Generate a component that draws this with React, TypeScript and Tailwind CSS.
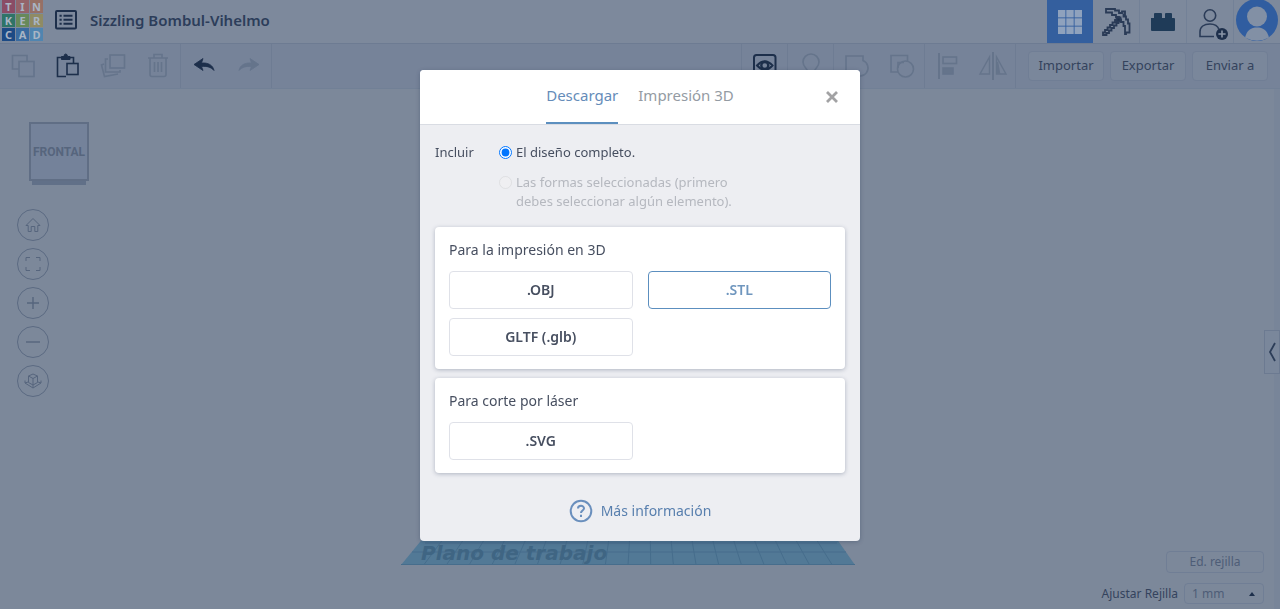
import type { ReactNode } from "react";

const LOGO = [
  { letter: "T", color: "bg-[#8a4c66]" },
  { letter: "I", color: "bg-[#94646a]" },
  { letter: "N", color: "bg-[#967066]" },
  { letter: "K", color: "bg-[#2f7468]" },
  { letter: "E", color: "bg-[#67895a]" },
  { letter: "R", color: "bg-[#8f8b64]" },
  { letter: "C", color: "bg-[#1c4a85]" },
  { letter: "A", color: "bg-[#3a6ba0]" },
  { letter: "D", color: "bg-[#5085b0]" },
];

function Icon({ size = 26, children }: { size?: number; children: ReactNode }) {
  return (
    <svg
      width={size}
      height={size}
      viewBox="0 0 26 26"
      fill="none"
      stroke="currentColor"
      strokeWidth="1.6"
      aria-hidden="true"
    >
      {children}
    </svg>
  );
}

function ToolButton({
  label,
  active = false,
  children,
}: {
  label: string;
  active?: boolean;
  children: ReactNode;
}) {
  return (
    <button
      type="button"
      aria-label={label}
      className={`flex h-full w-[45px] items-center justify-center ${
        active ? "text-[#1d2f4b]" : "text-[#65748b]"
      }`}
    >
      {children}
    </button>
  );
}

function ToolGroup({ children }: { children: ReactNode }) {
  return <div className="flex h-full border-r border-[#6e7c93]">{children}</div>;
}

function ViewButton({ label, children }: { label: string; children: ReactNode }) {
  return (
    <button
      type="button"
      aria-label={label}
      className="flex size-8 items-center justify-center rounded-full border border-[#5b6a82] text-[#56657d]"
    >
      {children}
    </button>
  );
}

function FormatButton({ selected = false, children }: { selected?: boolean; children: ReactNode }) {
  return (
    <button
      type="button"
      className={`h-[38px] rounded border bg-white text-sm font-semibold ${
        selected ? "border-[#5c8fbf] text-[#6f96be]" : "border-[#dfe1e8] text-[#474f60]"
      }`}
    >
      {children}
    </button>
  );
}

function Header() {
  return (
    <header className="flex h-11 shrink-0 items-center border-b border-[#6d7b92] bg-[#7d899c]">
      <div className="flex h-full items-center pb-0.5">
        <a href="#home" aria-label="Tinkercad" className="ml-0.5 grid grid-cols-3 gap-px">
          {LOGO.map((tile) => (
            <span
              key={tile.letter}
              className={`flex size-[13px] items-center justify-center text-[11px] leading-[13px] font-bold text-[#a9b5c4] ${tile.color}`}
            >
              {tile.letter}
            </span>
          ))}
        </a>
        <button type="button" aria-label="Diseños" className="ml-2.5 pb-0.5 text-[#1d2f4b]">
          <Icon>
            <rect x="3" y="4" width="20" height="17.5" rx="1" strokeWidth="2" />
            <path d="M10.500 8.800h9M10.500 12.800h9M10.500 16.800h9" strokeWidth="2" />
            <path d="M6.500 8.800h2.200M6.500 12.800h2.200M6.500 16.800h2.200" strokeWidth="2" />
          </Icon>
        </button>
        <h1 className="ml-[11px] pb-0.5 text-[15px] leading-5 font-semibold text-[#2c3d5a]">
          Sizzling Bombul-Vihelmo
        </h1>
      </div>

      <nav className="ml-auto flex h-full items-center">
        <button
          type="button"
          aria-label="Diseño 3D"
          className="flex h-full w-[46px] items-center justify-center bg-[#345f9e]"
        >
          <svg width="24" height="24" viewBox="0 0 24 24" fill="#8fa2bd" aria-hidden="true">
            {[0, 8.3, 16.6].map((y) =>
              [0, 8.3, 16.6].map((x) => <rect key={`${x}-${y}`} x={x} y={y} width="7.4" height="7.4" />),
            )}
          </svg>
        </button>
        <button
          type="button"
          aria-label="Bloques"
          className="flex h-full w-[47px] items-center justify-center border-r border-[#738197]"
        >
          <svg
            width="30"
            height="30"
            viewBox="0 0 30 30"
            fill="none"
            stroke="#2a3b57"
            strokeWidth="1.8"
            aria-hidden="true"
          >
            <path d="M5 2h9v1.500h4V6h3V4.500h3v3h-1.500v2H25v3h2v4h1.500v9H25v1.500h-1V19h-1.500v-4H20v-2.500h-2V10h-3V8h-4V5.500H5z" />
            <path d="M17.500 13h-3.500v2.500h-2.500V18H9v2.500H6.500V23H4v2.500H2V28h3.500v-2H8v-2.500h2.500V21H13v-2.500h2.500V16h2z" />
            <path d="M15.500 10.500h4v4h-4z" fill="#1d2f4b" />
          </svg>
        </button>
        <button
          type="button"
          aria-label="Ladrillos"
          className="flex h-full w-[47px] items-center justify-center border-r border-[#738197]"
        >
          <svg width="26" height="20" viewBox="0 0 26 20" fill="#1f3b58" aria-hidden="true">
            <path d="M1 6h3V2q0-1 1-1h6q1 0 1 1v4h3V2q0-1 1-1h5q1 0 1 1v4h2q1 0 1 1v11q0 1-1 1H2q-1 0-1-1z" />
          </svg>
        </button>
        <button
          type="button"
          aria-label="Invitar"
          className="flex h-full w-[47px] items-end justify-center border-r border-[#738197] pl-1"
        >
          <svg width="32" height="34" viewBox="0 0 32 34" fill="none" stroke="#2b3c58" strokeWidth="1.6" aria-hidden="true">
            <circle cx="14" cy="6.500" r="5.700" />
            <path d="M18 27.500H4V23c0-5 4-8 10-8s8 2.500 9 5.500" />
            <circle cx="26" cy="25" r="6" fill="#1d2f4b" stroke="none" />
            <path d="M26 21.400v7.200M22.400 25h7.200" stroke="#8a96a8" />
          </svg>
        </button>
        <button type="button" aria-label="Cuenta" className="flex h-full w-[46px] items-start justify-center">
          <svg width="42" height="42" viewBox="0 0 42 42" aria-hidden="true">
            <circle cx="21" cy="20" r="21" fill="#305da0" />
            <circle cx="21" cy="16.500" r="10" fill="#8290a5" />
            <path d="M9 37.500C11 30 15 27.500 21 27.500s10 2.500 12 10Q21 44 9 37.500z" fill="#8290a5" />
          </svg>
        </button>
      </nav>
    </header>
  );
}

function Toolbar() {
  return (
    <div className="flex h-[45px] shrink-0 items-center border-b border-[#718096] bg-[#768399]">
      <ToolGroup>
        <ToolButton label="Copiar">
          <Icon>
            <path d="M9 16H2.500V2.500H17V8" />
            <rect x="9" y="8.500" width="15" height="15" />
          </Icon>
        </ToolButton>
        <ToolButton label="Pegar" active>
          <Icon>
            <path d="M11 23.500H2.500v-19H7M14 4.500h4.500V10" />
            <path d="M6.500 6.500V3.500h2.500q0-2.500 1.700-2.500T12.500 3.500H15v3z" fill="currentColor" strokeWidth="1" />
            <rect x="12" y="10.500" width="11" height="11" />
          </Icon>
        </ToolButton>
        <ToolButton label="Duplicar">
          <Icon>
            <rect x="10" y="2" width="14.500" height="13" />
            <path d="M8 6H5.500v13H20v-2" />
            <path d="M4 11l-2.500 1 3 11.500L18 21" />
          </Icon>
        </ToolButton>
        <ToolButton label="Eliminar">
          <Icon>
            <path d="M3 5h20M9 5V1.500h8V5M5 5v16.500q0 2 2 2h12q2 0 2-2V5M9.500 9v10M13 9v10M16.500 9v10" />
          </Icon>
        </ToolButton>
      </ToolGroup>
      <ToolGroup>
        <ToolButton label="Deshacer" active>
          <Icon>
            <path
              d="M3 11.500 12 5.500 10.500 10C17 9.500 22 12 23 17.500 20 14 16 13 10.500 13.500L12 17.500z"
              fill="currentColor"
              strokeWidth="0.800"
            />
          </Icon>
        </ToolButton>
        <ToolButton label="Rehacer">
          <Icon>
            <path
              d="M23 11.500 14 5.500 15.500 10C9 9.500 4 12 3 17.500 6 14 10 13 15.500 13.500L14 17.500z"
              fill="currentColor"
              strokeWidth="0.800"
            />
          </Icon>
        </ToolButton>
      </ToolGroup>

      <div className="ml-auto flex h-full border-l border-[#6e7c93]">
        <ToolGroup>
          <ToolButton label="Mostrar todo" active>
            <Icon>
              <rect x="2" y="2" width="21.500" height="21.500" rx="2.500" strokeWidth="2" />
              <path d="M5 12.500Q12.800 4 20.500 12.500 12.800 21 5 12.500z" strokeWidth="2" />
              <circle cx="12.800" cy="12.500" r="3.500" strokeWidth="2.400" />
            </Icon>
          </ToolButton>
        </ToolGroup>
        <ToolGroup>
          <ToolButton label="Notas">
            <Icon>
              <path d="M9.500 18.500c0-3-4.500-4.500-4.500-9.500a8 8 0 0 1 16 0c0 5-4.500 6.500-4.500 9.500zM10 22h6" />
            </Icon>
          </ToolButton>
        </ToolGroup>
        <ToolGroup>
          <ToolButton label="Agrupar">
            <Icon>
              <path d="M2 3h17v4.600a8 8 0 1 1-9 12.700H2z" />
            </Icon>
          </ToolButton>
          <ToolButton label="Desagrupar">
            <Icon>
              <path d="M9 19H2V2.500h16.500V8" />
              <circle cx="16.500" cy="16" r="8" />
              <path d="M9 15V9.500h6" />
            </Icon>
          </ToolButton>
        </ToolGroup>
        <ToolGroup>
          <ToolButton label="Alinear">
            <Icon>
              <path d="M4 0v26" strokeWidth="2" />
              <rect x="8" y="4" width="13.500" height="6.500" />
              <rect x="8" y="15" width="10" height="6" fill="currentColor" />
            </Icon>
          </ToolButton>
          <ToolButton label="Reflejar">
            <svg
              width="30"
              height="28"
              viewBox="0 0 30 28"
              fill="none"
              stroke="currentColor"
              strokeWidth="1.4"
              aria-hidden="true"
            >
              <path d="M15 0v28" strokeWidth="2" />
              <path d="M11.500 5v17H2zM18.500 5v17H28z" />
              <path d="M19.500 10v11h2z" fill="currentColor" />
            </svg>
          </ToolButton>
        </ToolGroup>
        <div className="flex items-center gap-1.5 px-3">
          {["Importar", "Exportar", "Enviar a"].map((label) => (
            <button
              key={label}
              type="button"
              className="h-[30px] w-[76px] rounded-sm border border-[#707e95] bg-[#7a879b] text-[13px] text-[#34435d]"
            >
              {label}
            </button>
          ))}
        </div>
      </div>
    </div>
  );
}

function Workspace() {
  return (
    <main className="flex min-h-0 flex-1 bg-[#7c889a]">
      <div className="flex w-[156px] shrink-0 flex-col gap-6 pt-[33px] pl-[17px]">
        <button type="button" className="ml-3 flex w-[60px] flex-col items-center">
          <span className="flex h-[59px] w-full items-center justify-center border-2 border-[#606e85] bg-[#74829a] font-['Roboto',sans-serif] text-xs font-bold text-[#56657d]">
            FRONTAL
          </span>
          <span className="h-1 w-[54px] bg-[#617088]" />
        </button>
        <div className="flex flex-col gap-[7px]">
          <ViewButton label="Vista inicial">
            <svg width="16" height="16" viewBox="0 0 16 16" fill="none" stroke="currentColor" aria-hidden="true">
              <path d="M3.200 8.500H1L8 1.500l7 7h-2.200v6H9.800V9.500H6.200v5h-3z" />
            </svg>
          </ViewButton>
          <ViewButton label="Encajar vista">
            <svg width="16" height="16" viewBox="0 0 16 16" fill="none" stroke="currentColor" aria-hidden="true">
              <path d="M1 5V1.500h4M11 1.500h4V5M15 11v3.500h-4M5 14.500H1V11" />
            </svg>
          </ViewButton>
          <ViewButton label="Acercar">
            <svg width="14" height="14" viewBox="0 0 14 14" stroke="currentColor" strokeWidth="1.4" aria-hidden="true">
              <path d="M7 1v12M1 7h12" />
            </svg>
          </ViewButton>
          <ViewButton label="Alejar">
            <svg width="14" height="14" viewBox="0 0 14 14" stroke="currentColor" strokeWidth="1.4" aria-hidden="true">
              <path d="M0 7h14" />
            </svg>
          </ViewButton>
          <ViewButton label="Vista ortográfica">
            <svg width="18" height="16" viewBox="0 0 18 16" fill="none" stroke="currentColor" aria-hidden="true">
              <path d="M9 1l4.500 2v6.500L9 12 4.500 9.500V3zM4.500 3 9 5.500 13.500 3M9 5.500V15" />
              <path d="M1 7.500v2.500l8 5 8-5V7.500M1 10l3-1M17 10l-3-1" />
            </svg>
          </ViewButton>
        </div>
      </div>

      <div className="flex flex-1 items-end justify-center pb-11">
        <svg width="454" height="40" viewBox="0 0 454 40" aria-hidden="true">
          <path d="M33 0h393l28 40H0z" fill="#527996" />
          <g stroke="#466d8c" fill="none">
            <path d="M11 27h434M0 39.500h454M24 18h412" />
            {[1, 2, 3, 4, 5, 6, 7, 8, 9, 10, 11, 12, 13, 14, 15, 16, 17, 18, 19].map((n) => (
              <path key={n} d={`M${n * 22.7} 40L${33 + n * 19.65} 0`} />
            ))}
          </g>
          <text
            x="20"
            y="35"
            fill="#3f6583"
            className="font-['DejaVu_Sans',sans-serif] text-[20px] font-bold italic"
          >
            Plano de trabajo
          </text>
        </svg>
      </div>

      <aside className="flex w-[180px] shrink-0 flex-col items-end border-r-[6px] border-[#788599]">
        <button
          type="button"
          aria-label="Mostrar formas"
          className="mt-[241px] -mr-[6px] flex h-11 w-4 items-center justify-center border border-[#6c7a91] bg-[#7a879b]"
        >
          <svg width="8" height="20" viewBox="0 0 8 20" fill="none" stroke="#2c3d58" strokeWidth="1.8" aria-hidden="true">
            <path d="M7 1 2 10l5 9" />
          </svg>
        </button>
        <div className="mt-auto flex flex-col items-end gap-2.5 pr-2.5 pb-[5px] text-xs">
          <button
            type="button"
            className="h-[22px] w-[98px] rounded-sm border border-[#707e95] text-[#4e5d77]"
          >
            Ed. rejilla
          </button>
          <div className="flex items-center gap-1.5">
            <label htmlFor="snap" className="text-[#34435d]">
              Ajustar Rejilla
            </label>
            <div className="grid w-20 items-center">
              <select
                id="snap"
                className="col-start-1 row-start-1 h-[21px] appearance-none rounded-sm border border-[#707e95] pl-[7px] text-[#4e5d77]"
              >
                <option>1 mm</option>
              </select>
              <svg
                width="6"
                height="4"
                viewBox="0 0 6 4"
                fill="#1d2f4b"
                aria-hidden="true"
                className="pointer-events-none col-start-1 row-start-1 mr-[9px] justify-self-end"
              >
                <path d="M3 0l3 4H0z" />
              </svg>
            </div>
          </div>
        </div>
      </aside>
    </main>
  );
}

function DownloadDialog() {
  return (
    <div className="fixed inset-0 flex items-start justify-center pt-[70px]">
      <section
        role="dialog"
        aria-label="Descargar"
        className="w-[440px] max-w-full overflow-hidden rounded bg-[#edeef2] text-[#474f60] shadow-[0_1px_4px_rgba(30,45,75,0.3)]"
      >
        <div className="grid h-[55px] grid-cols-[1fr_auto_1fr] border-b border-[#d9dce3] bg-white">
          <div className="col-start-2 flex gap-5 text-[15px]" role="tablist">
            <button
              type="button"
              role="tab"
              aria-selected="true"
              className="border-b-2 border-[#5c8fbf] pb-0.5 text-[#658cb9]"
            >
              Descargar
            </button>
            <button
              type="button"
              role="tab"
              aria-selected="false"
              className="border-b-2 border-transparent pb-0.5 text-[#949ba3]"
            >
              Impresión 3D
            </button>
          </div>
          <button type="button" aria-label="Cerrar" className="mr-[22px] self-center justify-self-end">
            <svg width="12" height="12" viewBox="0 0 12 12" stroke="#a2a2a4" strokeWidth="2.800" aria-hidden="true">
              <path d="M1 1l10 10M11 1L1 11" />
            </svg>
          </button>
        </div>

        <div className="px-[15px] pt-[18px] pb-[18px]">
          <div
            role="radiogroup"
            aria-labelledby="include"
            className="grid grid-cols-[64px_1fr] text-[13px] leading-[19px]"
          >
            <span id="include">Incluir</span>
            <div className="flex flex-col gap-[11px]">
              <label className="flex items-start gap-1">
                <input type="radio" name="include" defaultChecked className="mt-[3px] size-[13px]" />
                El diseño completo.
              </label>
              <label className="flex items-start gap-1 text-[#b5b8bf]">
                <input type="radio" name="include" disabled className="mt-[3px] size-[13px] shrink-0 opacity-40" />
                <span>
                  Las formas seleccionadas (primero
                  <br />
                  debes seleccionar algún elemento).
                </span>
              </label>
            </div>
          </div>

          <div className="mt-4 rounded bg-white px-[14px] py-[13px] shadow-[0_1px_4px_rgba(60,75,105,0.35)]">
            <h2 className="text-sm leading-5">Para la impresión en 3D</h2>
            <div className="mt-[11px] grid grid-cols-2 gap-x-[15px] gap-y-[9px]">
              <FormatButton>.OBJ</FormatButton>
              <FormatButton selected>.STL</FormatButton>
              <FormatButton>GLTF (.glb)</FormatButton>
            </div>
          </div>

          <div className="mt-[9px] rounded bg-white px-[14px] py-[13px] shadow-[0_1px_4px_rgba(60,75,105,0.35)]">
            <h2 className="text-sm leading-5">Para corte por láser</h2>
            <div className="mt-[11px] grid grid-cols-2 gap-x-[15px]">
              <FormatButton>.SVG</FormatButton>
            </div>
          </div>

          <a href="#help" className="mt-[26px] flex items-center justify-center gap-2 text-sm text-[#587fae]">
            <svg width="24" height="24" viewBox="0 0 24 24" fill="none" stroke="#6a8fbd" strokeWidth="2" aria-hidden="true">
              <circle cx="12" cy="12" r="10.300" />
              <path d="M9 9.500C9 6 15 6 15 9.300c0 2.200-3 2.300-3 4.700M12 15.800v2.200" />
            </svg>
            Más información
          </a>
        </div>
      </section>
    </div>
  );
}

export default function App() {
  return (
    <div className="flex h-screen flex-col overflow-hidden font-['Noto_Sans',sans-serif]">
      <Header />
      <Toolbar />
      <Workspace />
      <DownloadDialog />
    </div>
  );
}
